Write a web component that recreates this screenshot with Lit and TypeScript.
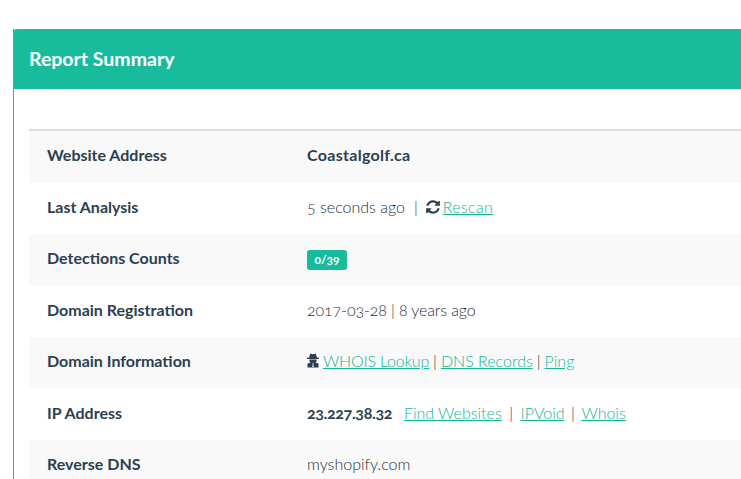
import { LitElement, html, css } from "lit";
import { customElement } from "lit/decorators.js";

@customElement("app-root")
export class AppRoot extends LitElement {
  static styles = css`
    :host { display: block; height: 479px; overflow: hidden; font-family: "Lato", "Open Sans", sans-serif; color: #2c3e50; font-variant-numeric: oldstyle-nums; }
    .wrap { padding: 29px 0 0 13px; width: 900px; }
    .card { border-left: 1px solid #18bc9c; }
    .head { margin-left: -1px; background: #18bc9c; color: #fff; height: 60px; display: flex; align-items: center; padding: 0 0 2px 16px; box-sizing: border-box; border-radius: 4px 0 0 0; font-size: 19.500px; font-weight: 700; }
    .body { padding: 40px 0 0 15px; }
    .table { border-top: 2px solid #ddd; }
    .row { display: grid; grid-template-columns: 260px 1fr; padding: 0 0 4px 18px; box-sizing: border-box; height: 51.500px; align-items: center; font-size: 16px; }
    .row:nth-child(odd) { background: #f9f9f9; }
    .label { font-weight: 700; }
    .val { font-weight: 300; color: #1f2d3b; display: flex; align-items: center; white-space: pre; }
    a { color: #12b595; text-decoration: underline; }
    b { font-weight: 700; color: #2c3e50; }
    .strong { letter-spacing: 0.3px; }
    .sep { margin: 0 7.500px; }
    .sep.first { margin: 0 7px 0 9px; }
    .sep.last { margin: 0 6.500px; }
    .tight { margin: 0 4px; }
    .date { letter-spacing: -0.120px; }
    .rescan { letter-spacing: 0.3px; }
    .whois { letter-spacing: -0.2px; }
    .badge { background: #18bc9c; color: #fff; font-size: 12px; font-weight: 700; padding: 3px 7.500px; border-radius: 3px; line-height: 14px; margin-top: 4px; }
    .ic { flex: none; margin-right: 4px; }
    .ic.refresh { margin: 2px 2px 0 0; }
    .ip { margin-right: 12px; letter-spacing: -0.350px; }
  `;
  render() {
    return html`<div class="wrap"><div class="card">
      <div class="head">Report Summary</div>
      <div class="body"><div class="table">
        <div class="row"><div class="label">Website Address</div><div class="val"><b class="strong">Coastalgolf.ca</b></div></div>
        <div class="row"><div class="label">Last Analysis</div><div class="val">5 seconds ago<span class="sep first">|</span><svg class="ic refresh" width="16" height="16" viewBox="0 0 1792 1792"><path d="M1639 1056q0 5-1 7-64 268-268 434.500t-478 166.500q-146 0-282.500-55t-243.500-157l-129 129q-19 19-45 19t-45-19-19-45v-448q0-26 19-45t45-19h448q26 0 45 19t19 45-19 45l-137 137q71 66 161 102t187 36q134 0 250-65t186-179q11-17 53-117 8-23 30-23h192q13 0 22.500 9.500t9.500 22.500zm25-800v448q0 26-19 45t-45 19h-448q-26 0-45-19t-19-45 19-45l138-138q-148-137-349-137-134 0-250 65t-186 179q-11 17-53 117-8 23-30 23h-199q-13 0-22.500-9.500t-9.500-22.500v-7q65-268 270-434.500t480-166.500q146 0 284 55.500t245 156.500l130-129q19-19 45-19t45 19 19 45z" fill="#2c3e50"/></svg><a class="rescan" href="#">Rescan</a></div></div>
        <div class="row"><div class="label">Detections Counts</div><div class="val"><span class="badge">0/39</span></div></div>
        <div class="row"><div class="label">Domain Registration</div><div class="val date">2017-03-28 | 8 years ago</div></div>
        <div class="row"><div class="label">Domain Information</div><div class="val"><svg class="ic" width="12" height="15" viewBox="0 0 12 15"><path fill-rule="evenodd" d="M3.200 0.500C4.400 1 5.200 1.200 6 1.200S7.600 1 8.800 0.500L9.800 4.500H11.800V6H0.200V4.500H2.200ZM2.500 6.500H9.500V7.800C9.500 8.600 9.200 9.300 8.600 9.700L11.500 10.500V14.500H0.500V10.500L3.400 9.700C2.800 9.300 2.500 8.600 2.500 7.800ZM5.300 10.300 5.700 11.500 5.200 14H6.800L6.300 11.500 6.700 10.300Z" fill="#2c3e50"/></svg><a class="whois" href="#">WHOIS Lookup</a><span class="tight">|</span><a href="#">DNS Records</a><span class="tight">|</span><a href="#">Ping</a></div></div>
        <div class="row"><div class="label">IP Address</div><div class="val"><b class="ip">23.227.38.32</b><a href="#">Find Websites</a><span class="sep">|</span><a href="#">IPVoid</a><span class="sep last">|</span><a href="#">Whois</a></div></div>
        <div class="row"><div class="label">Reverse DNS</div><div class="val">myshopify.com</div></div>
      </div></div>
    </div></div>`;
  }
}
